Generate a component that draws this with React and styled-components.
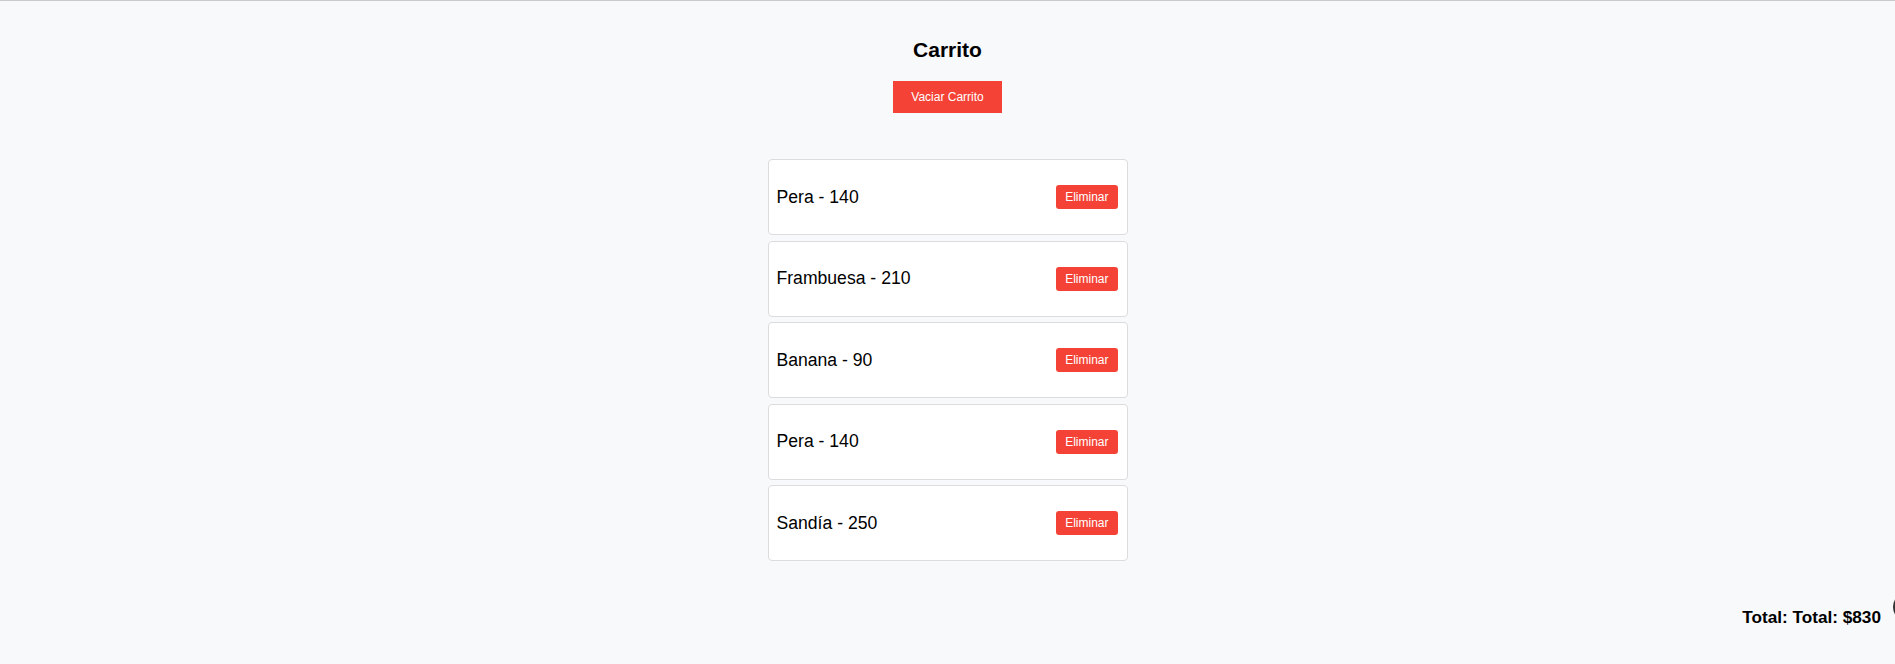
import React from "react";
import styled, { createGlobalStyle } from "styled-components";

const GlobalStyle = createGlobalStyle`
  body {
    margin: 0;
    background-color: #f8f9fa;
    font-family: "Liberation Sans", Arial, sans-serif;
    color: #000;
    overflow: hidden;
  }
`;

const Page = styled.div`
  min-height: 663px;
  border-top: 1px solid #c9cacd;
  display: flex;
  flex-direction: column;
  align-items: center;
  overflow: hidden;
`;

const Title = styled.h2`
  margin: 37px 0 0;
  font-size: 21px;
  font-weight: 700;
  line-height: 24px;
`;

const ClearButton = styled.button`
  margin-top: 19px;
  padding: 9px 18px;
  border: none;
  border-radius: 0;
  background-color: #f44336;
  color: #fff;
  font-family: inherit;
  font-size: 12px;
  cursor: pointer;
`;

const List = styled.ul`
  list-style: none;
  margin: 46px 0 0;
  padding: 0;
  width: 360px;
  display: flex;
  flex-direction: column;
  gap: 5.5px;
`;

const Item = styled.li`
  box-sizing: border-box;
  height: 76px;
  padding: 0 9px 0 8px;
  display: flex;
  align-items: center;
  justify-content: space-between;
  background-color: #fff;
  border: 1px solid #dcdcdf;
  border-radius: 4px;
  font-size: 17.6px;
`;

const RemoveButton = styled.button`
  padding: 5px 9px;
  border: none;
  border-radius: 3px;
  background-color: #f44336;
  color: #fff;
  font-family: inherit;
  font-size: 12px;
  cursor: pointer;
`;

const Footer = styled.div`
  align-self: stretch;
  margin-top: 30.5px;
  display: flex;
  justify-content: flex-end;
  align-items: flex-end;
`;

const Total = styled.span`
  font-size: 17.2px;
  font-weight: 700;
  line-height: 19.5px;
`;

const CartBubble = styled.div`
  box-sizing: border-box;
  width: 30px;
  height: 30px;
  margin: 0 -28px 6px 12px;
  border: 2px solid #333;
  border-radius: 50%;
  background-color: #fff;
  flex-shrink: 0;
`;

const items = [
  { name: "Pera", price: 140 },
  { name: "Frambuesa", price: 210 },
  { name: "Banana", price: 90 },
  { name: "Pera", price: 140 },
  { name: "Sandía", price: 250 },
];

const App = () => {
  const total = items.reduce((sum, i) => sum + i.price, 0);

  return (
    <>
      <GlobalStyle />
      <Page>
        <Title>Carrito</Title>
        <ClearButton>Vaciar Carrito</ClearButton>
        <List>
          {items.map((item, idx) => (
            <Item key={idx}>
              <span>
                {item.name} - {item.price}
              </span>
              <RemoveButton>Eliminar</RemoveButton>
            </Item>
          ))}
        </List>
        <Footer>
          <Total>Total: Total: ${total}</Total>
          <CartBubble />
        </Footer>
      </Page>
    </>
  );
};

export default App;
